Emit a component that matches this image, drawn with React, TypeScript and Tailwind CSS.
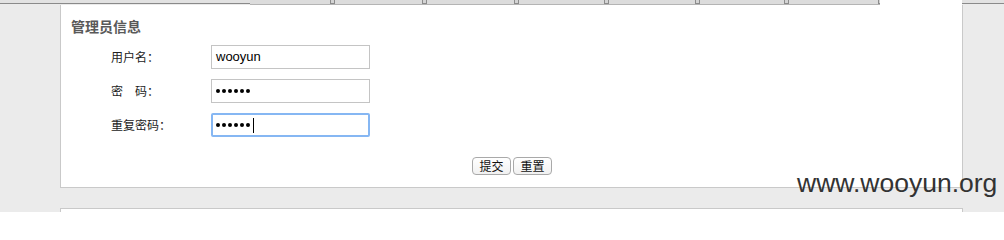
import React from "react";

const tabs = [82, 92, 92, 90, 91, 89, 94];

function TopStrip() {
  return (
    <div className="flex h-[5px]">
      <div className="w-[250px] h-[4px] bg-[#e2e2e2] border-b border-[#8a8a8a]" />
      <div className="w-[630px] h-[5px] flex bg-[#dcdcdc] border-b border-[#b4b4b4]">
        {tabs.map((w, i) => (
          <div key={i} className="flex justify-end shrink-0" style={{ width: w }}>
            <div className="w-[5px] h-[4px] bg-[#d4d4d4] border-x border-b border-[#8c8c8c] -mr-[3px]" />
          </div>
        ))}
      </div>
      <div className="w-[82px] bg-white" />
      <div className="flex-1 h-[4px] bg-[#e2e2e2] border-b border-[#8a8a8a]" />
    </div>
  );
}

function Field({ label, value, password, focused }: { label: string; value: string; password?: boolean; focused?: boolean }) {
  return (
    <div className="flex items-center pl-[50px] h-[24px] mb-[10px]">
      <span className="w-[100px] text-[12px] text-[#222] font-['Noto_Sans_CJK_SC',sans-serif] whitespace-pre">{label}</span>
      <div
        className={`w-[159px] h-[24px] flex items-center bg-white ${
          focused
            ? "border-2 border-[#86b7f3] rounded-[2px] pl-[3px]"
            : "border border-[#c4c4c4] pl-[4px]"
        }`}
      >
        {password ? (
          <span className="flex items-center gap-[2px]">
            {value.split("").map((_, i) => (
              <span key={i} className="w-[4px] h-[4px] rounded-full bg-black" />
            ))}
            {focused && <span className="ml-[1px] w-px h-[15px] bg-black" />}
          </span>
        ) : (
          <span className="text-[13px] text-black font-['Liberation_Sans',Arial,sans-serif]">{value}</span>
        )}
      </div>
    </div>
  );
}

function Btn({ children }: { children: React.ReactNode }) {
  return (
    <button className="h-[18px] w-[39px] rounded-[4px] border border-[#a9a9a9] bg-gradient-to-b from-white to-[#f1f1f1] text-[12px] leading-[16px] text-[#111] font-['Noto_Sans_CJK_SC',sans-serif]">
      {children}
    </button>
  );
}

export default function App() {
  return (
    <div className="relative w-[1004px] h-[212px] overflow-hidden bg-[#ebebeb]">
      <TopStrip />
      <div className="ml-[60px] w-[903px] h-[183px] bg-white border-x border-b border-[#c9c9c9]">
        <h3 className="pl-[10px] pt-[11px] h-[40px] text-[14px] leading-[20px] font-bold text-[#595959] font-['Noto_Sans_CJK_SC',sans-serif]">
          管理员信息
        </h3>
        <Field label="用户名：" value="wooyun" />
        <Field label="密　码：" value="••••••" password />
        <Field label="重复密码：" value="••••••" password focused />
        <div className="flex justify-center gap-[2px] mt-[20px] pl-[1px]">
          <Btn>提交</Btn>
          <Btn>重置</Btn>
        </div>
      </div>
      <div className="ml-[60px] mt-[20px] w-[903px] h-[20px] bg-white border-x border-t border-[#c9c9c9]" />
      <div className="absolute left-[797px] top-[170px] text-[26.5px] leading-[26px] text-[#333] font-['Liberation_Sans',Arial,sans-serif]">
        www.wooyun.org
      </div>
    </div>
  );
}
